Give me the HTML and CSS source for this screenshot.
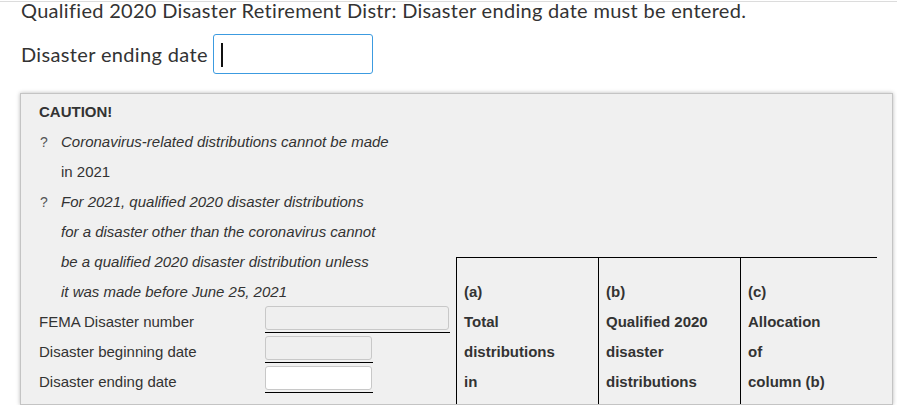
FILE: index.html
```html
<!DOCTYPE html>
<html lang="en">
<head>
<meta charset="utf-8">
<title>Qualified 2020 Disaster Retirement Distr</title>
<link rel="stylesheet" href="styles.css">
</head>
<body>
<div class="topline"></div>
<div class="page">
  <h1 class="msg">Qualified 2020 Disaster Retirement Distr: Disaster ending date must be entered.</h1>
  <div class="entry">
    <label class="entry-label">Disaster ending date</label>
    <div class="focus-input"><span class="caret"></span></div>
  </div>
  <div class="panel">
    <div class="panel-body">
      <div class="notes">
        <div class="caution">CAUTION!</div>
        <div class="item"><span class="q">?</span><span class="it">Coronavirus-related distributions cannot be made</span></div>
        <div class="cont">in 2021</div>
        <div class="item"><span class="q">?</span><span class="it">For 2021, qualified 2020 disaster distributions</span></div>
        <div class="cont it">for a disaster other than the coronavirus cannot</div>
        <div class="cont it">be a qualified 2020 disaster distribution unless</div>
        <div class="cont it">it was made before June 25, 2021</div>
        <div class="field">
          <span class="field-label">FEMA Disaster number</span>
          <span class="fbox-wrap wide"><span class="fbox gray"></span></span>
        </div>
        <div class="field">
          <span class="field-label">Disaster beginning date</span>
          <span class="fbox-wrap narrow"><span class="fbox gray"></span></span>
        </div>
        <div class="field">
          <span class="field-label">Disaster ending date</span>
          <span class="fbox-wrap narrow"><span class="fbox white"></span></span>
        </div>
      </div>
      <table class="cols">
        <tr>
          <th class="col-a">(a)<br>Total<br>distributions<br>in<br>2021</th>
          <th class="col-b">(b)<br>Qualified 2020<br>disaster<br>distributions<br>made in 2021</th>
          <th class="col-c">(c)<br>Allocation<br>of<br>column (b)</th>
        </tr>
      </table>
    </div>
  </div>
</div>
</body>
</html>
```
FILE: styles.css
```css
* { box-sizing: border-box; }
body {
  margin: 0;
  background: #fff;
  color: #333;
  font-family: Lato, "Open Sans", sans-serif;
}
.topline {
  height: 1px;
  margin-top: 1px;
  background: #dcdcdc;
}
.page {
  padding-left: 21px;
}
.msg {
  margin: 0;
  font-size: 20px;
  font-weight: 400;
  letter-spacing: 0.3px;
  line-height: 16px;
}
.entry {
  display: flex;
  align-items: center;
  height: 40px;
  margin-top: 16px;
}
.entry-label {
  font-size: 20px;
  letter-spacing: 0.35px;
  margin-right: 5px;
}
.focus-input {
  width: 160px;
  height: 40px;
  border: 1px solid #3c9be0;
  border-radius: 3px;
  background: #fff;
  padding: 8px 7px;
}
.caret {
  display: block;
  width: 2px;
  height: 24px;
  background: #111;
}
.panel {
  width: 873px;
  height: 312px;
  margin: 19px 0 0 -1px;
  border: 1px solid #c4c4c4;
  background: #f0f0f0;
  box-shadow: 0 0 4px rgba(0, 0, 0, 0.28);
  overflow: hidden;
  padding: 3px 0 0 18px;
  font-family: "Liberation Sans", Arial, sans-serif;
  font-size: 15px;
  line-height: 30px;
  color: #333;
}
.panel-body {
  display: flex;
  align-items: flex-start;
}
.notes {
  width: 417px;
  flex: none;
}
.caution {
  font-weight: bold;
}
.item {
  display: flex;
}
.q {
  width: 22px;
  padding-left: 1px;
  color: #555;
  font-size: 14px;
}
.it {
  font-style: italic;
}
.cont {
  padding-left: 22px;
}
.field {
  display: flex;
  height: 30px;
}
.field-label {
  width: 226px;
  flex: none;
}
.fbox-wrap {
  display: block;
  margin-top: -1px;
  height: 27px;
  padding-bottom: 2px;
  border-bottom: 1px solid #000;
}
.fbox-wrap.wide { width: 185px; }
.fbox-wrap.narrow { width: 108px; }
.fbox {
  display: block;
  width: calc(100% - 1px);
  height: 24px;
  border: 1px solid #c8c8c8;
  border-radius: 3px;
}
.fbox.gray { background: #efefef; }
.fbox.white { background: #fff; }
.cols {
  margin-top: 160px;
  border-collapse: collapse;
  border-top: 1px solid #000;
}
.cols th {
  vertical-align: top;
  text-align: left;
  font-weight: bold;
  padding: 19px 0 0 7px;
  border-left: 1px solid #000;
  white-space: nowrap;
}
.col-a { width: 142px; }
.col-b { width: 142px; }
.col-c { width: 136px; }
```
